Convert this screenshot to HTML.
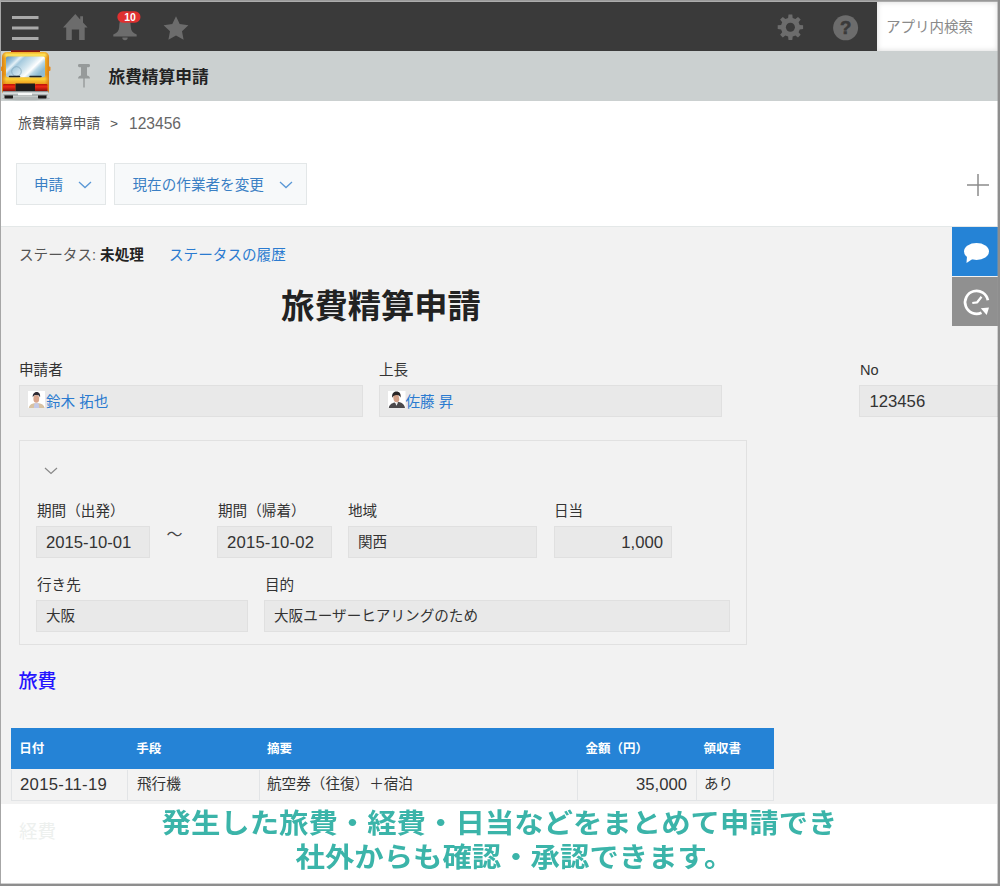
<!DOCTYPE html>
<html lang="ja">
<head>
<meta charset="utf-8">
<title>旅費精算申請</title>
<style>
*{box-sizing:border-box;margin:0;padding:0}
html,body{width:1000px;height:886px;overflow:hidden;background:#fff}
body{font-family:"Liberation Sans","Noto Sans CJK JP",sans-serif;color:#333;font-size:14px;position:relative}
.abs{position:absolute}
.fr{position:absolute;z-index:50}
#frT{left:0;top:0;width:1000px;height:2px;background:linear-gradient(#999 50%,#acacac 50%)}
#frL{left:0;top:0;width:1px;height:886px;background:#a6a6a6}
#frR{left:997px;top:0;width:3px;height:886px;background:linear-gradient(90deg,rgba(150,150,150,0.45) 33.3%,#8e8e8e 33.3%)}
#frB{left:0;top:883px;width:1000px;height:3px;background:linear-gradient(rgba(150,150,150,0.45) 33.3%,#8e8e8e 33.3%)}
#topbar{left:1px;top:2px;width:876px;height:48.500px;background:#3a3a3a}
#search{left:877px;top:2px;width:121px;height:49px;background:#fff;box-shadow:inset 0 0 5px 1px #e2e2e2;color:#8a8a8a;font-size:14.5px;line-height:50.500px;padding-left:9px;white-space:nowrap}
#appbar{left:1px;top:50.500px;width:997px;height:50px;background:#cbd0d0}
#apptitle{left:108.500px;top:52.500px;height:50px;line-height:50px;font-size:16.7px;font-weight:700;color:#222;white-space:nowrap}
#crumb{left:18px;top:113px;font-size:13.7px;line-height:22px;color:#555;white-space:nowrap}
#crumb span.n{font-size:15.6px;color:#666}
.btn{top:163px;height:42px;background:#f7f9fa;border:1px solid #e3e7e8;color:#3a7fc4;font-size:14.6px;line-height:43px;white-space:nowrap}
#content{left:1px;top:226px;width:996px;height:578px;background:#f2f2f2;border-top:1px solid #e4e8e8}
.lbl{font-size:14.6px;line-height:21px;color:#333;white-space:nowrap}
.fld{height:32px;background:#e9e9e9;border:1px solid #e0e0e0;font-size:14.6px;line-height:31px;padding:0 9px;color:#333;white-space:nowrap}
.fld.r{text-align:right}
.fld a,.link{color:#2b7bd0;text-decoration:none}
#group{left:19px;top:440px;width:728px;height:205px;border:1px solid #e1e1e1;background:#f2f2f2}
#thead{left:10.800px;top:727.800px;width:763.500px;height:41.700px;background:#2583d6}
.th{top:728px;height:41px;line-height:43px;color:#fff;font-size:12.5px;font-weight:700;white-space:nowrap}
#trow{left:10.800px;top:769.500px;width:763.500px;height:31px;background:#f3f3f3;border:1px solid #e2e4e6;border-top:none}
.td{top:769px;height:30px;line-height:31px;font-size:14.6px;color:#333;white-space:nowrap}
.vsep{top:769.500px;width:1px;height:30px;background:#e2e4e6}
#overlay{left:1px;top:803.500px;width:997px;height:80px;background:rgba(255,255,255,0.96)}
#caption,#caption2{transform-origin:0 50%;transform:scaleY(0.93);font-size:29.4px;line-height:36px;font-weight:700;color:#3bb4a9;white-space:nowrap;z-index:20}
.n{font-size:16.7px}
</style>
</head>
<body>
<!-- top bar -->
<div id="topbar" class="abs"></div>
<svg class="abs" style="left:1px;top:2px" width="876" height="49" viewBox="0 0 876 49">
  <g fill="#a9a9a9">
    <rect x="11" y="14" width="26.500" height="3"/>
    <rect x="11" y="24.500" width="26.500" height="3"/>
    <rect x="11" y="35" width="26.500" height="3"/>
  </g>
  <path fill="#6c6c6c" d="M62 25.400 L74.300 12.100 L79.200 17.400 V14.200 H82 V20.400 L86.600 25.400 H83.700 V38 H78.100 V27.500 H70.800 V38 H65.200 V25.400 Z"/>
  <g fill="#6c6c6c">
    <path d="M124 15.500 C118.500 15.500 118.500 21 118.200 25 C118 29 116 31 112.300 32.500 V34.500 H135.700 V32.500 C132 31 130 29 129.800 25 C129.500 21 129.500 15.500 124 15.500 Z"/>
    <path d="M121.300 35.500 H126.700 A2.700 2.700 0 0 1 121.300 35.500 Z"/>
  </g>
  <rect x="116.300" y="9.300" width="23.200" height="11.400" rx="5.700" fill="#e03030"/>
  <path fill="#6c6c6c" d="M175 14.200 L178.700 22.100 L187.400 23.200 L181 29.200 L182.600 37.700 L175 33.500 L167.400 37.700 L169 29.200 L162.600 23.200 L171.300 22.100 Z"/>
  <g transform="translate(789.400,25.200)">
    <path fill="#6c6c6c" d="M9.300 -2.300 L12.700 -1.900 L12.700 1.900 L9.300 2.300 L8.200 5.000 L10.300 7.600 L7.600 10.300 L5.000 8.200 L2.300 9.300 L1.900 12.700 L-1.900 12.700 L-2.300 9.300 L-5.000 8.200 L-7.600 10.300 L-10.300 7.600 L-8.200 5.000 L-9.300 2.300 L-12.700 1.900 L-12.700 -1.900 L-9.300 -2.300 L-8.200 -5.000 L-10.300 -7.600 L-7.600 -10.300 L-5.000 -8.200 L-2.300 -9.300 L-1.900 -12.700 L1.900 -12.700 L2.300 -9.300 L5.000 -8.200 L7.600 -10.300 L10.300 -7.600 L8.200 -5.000 Z"/>
    <circle r="4.500" fill="#3a3a3a"/>
  </g>
  <circle cx="844.600" cy="25.800" r="12.500" fill="#6c6c6c"/>
</svg>
<div class="abs" style="left:118px;top:10.500px;width:24px;height:12px;line-height:12px;text-align:center;font-size:10.500px;font-weight:700;color:#fff;letter-spacing:-0.2px">10</div>
<div class="abs" style="left:833.600px;top:17px;width:24px;height:22px;line-height:22px;text-align:center;font-size:18.500px;font-weight:700;color:#3a3a3a;-webkit-text-stroke:0.600px #3a3a3a">?</div>
<div id="search" class="abs">アプリ内検索</div>

<!-- app bar -->
<div id="appbar" class="abs"></div>
<svg class="abs" style="left:0;top:46px" width="100" height="58" viewBox="0 46 100 58">
  <defs>
    <linearGradient id="gb" x1="0" y1="0" x2="0" y2="1"><stop offset="0" stop-color="#f3a922"/><stop offset="0.070" stop-color="#fde65c"/><stop offset="0.160" stop-color="#f6b526"/><stop offset="0.550" stop-color="#f0a21c"/><stop offset="0.660" stop-color="#fbd23a"/><stop offset="0.780" stop-color="#ee9a1a"/><stop offset="1" stop-color="#d9781a"/></linearGradient>
    <linearGradient id="gs" x1="0" y1="0" x2="1" y2="0"><stop offset="0" stop-color="#d67c14" stop-opacity="0.900"/><stop offset="0.090" stop-color="#d67c14" stop-opacity="0"/><stop offset="0.910" stop-color="#d67c14" stop-opacity="0"/><stop offset="1" stop-color="#d67c14" stop-opacity="0.900"/></linearGradient>
    <linearGradient id="gw" x1="0" y1="0" x2="1" y2="0.550"><stop offset="0" stop-color="#5b8fb3"/><stop offset="0.220" stop-color="#a9cbe0"/><stop offset="0.300" stop-color="#e6f1f7"/><stop offset="0.380" stop-color="#a4c9dd"/><stop offset="0.620" stop-color="#d5e7f0"/><stop offset="0.760" stop-color="#ffffff"/><stop offset="0.860" stop-color="#b9d7e6"/><stop offset="1" stop-color="#8fbcd3"/></linearGradient>
    <linearGradient id="gr" x1="0" y1="0" x2="0" y2="1"><stop offset="0" stop-color="#b81208"/><stop offset="0.350" stop-color="#ee2a14"/><stop offset="1" stop-color="#7e0a06"/></linearGradient>
    <linearGradient id="gm" x1="0" y1="0" x2="0" y2="1"><stop offset="0" stop-color="#6e7677"/><stop offset="0.450" stop-color="#e9eded"/><stop offset="1" stop-color="#8a9293"/></linearGradient>
  </defs>
  <ellipse cx="26" cy="98.500" rx="24" ry="1.800" fill="#9aa0a0" opacity="0.550"/>
  <rect x="11" y="50.300" width="29" height="3" fill="#8e1a10"/>
  <rect x="0.800" y="66.500" width="3" height="4.500" rx="1" fill="#e8891a"/>
  <rect x="47.500" y="66.500" width="3" height="4.500" rx="1" fill="#e8891a"/>
  <rect x="4.500" y="94" width="8.500" height="4.600" rx="1.200" fill="#1d1b1b"/>
  <rect x="38" y="94" width="8.500" height="4.600" rx="1.200" fill="#1d1b1b"/>
  <path d="M7.500 52 H43.500 Q49 52 49 57.500 V91 Q49 93 47 93 H4 Q2 93 2 91 V57.500 Q2 52 7.500 52 Z" fill="url(#gb)"/>
  <path d="M7.500 52 H43.500 Q49 52 49 57.500 V91 Q49 93 47 93 H4 Q2 93 2 91 V57.500 Q2 52 7.500 52 Z" fill="url(#gs)"/>
  <rect x="6" y="56.500" width="39" height="20.800" rx="1.800" fill="url(#gw)"/>
  <circle cx="16.500" cy="71.500" r="4.800" fill="none" stroke="#7fa3b8" stroke-width="1" opacity="0.700"/>
  <path d="M9.500 76.600 H19.500 M30 76.600 H41" stroke="#22282b" stroke-width="1.500" stroke-linecap="round"/>
  <rect x="3" y="84" width="12.500" height="7.600" rx="1" fill="url(#gr)"/>
  <rect x="35" y="84" width="12.500" height="7.600" rx="1" fill="url(#gr)"/>
  <rect x="15.500" y="83.500" width="19.500" height="7.700" fill="#1e1d1d"/>
  <path d="M2.500 91 H48.500 L47.500 95.500 H3.500 Z" fill="url(#gm)"/>
  <rect x="18" y="93" width="14" height="2.200" fill="#f7f9f9"/>
</svg>
<svg class="abs" style="left:76px;top:62px" width="16" height="28" viewBox="76 62 16 28">
  <g fill="#969a9a">
    <rect x="78" y="64" width="12" height="3.200" rx="1.400"/>
    <rect x="81" y="66.500" width="6" height="10"/>
    <path d="M78 78.500 C78 76.500 80 75.500 81 75.500 H87 C88 75.500 90 76.500 90 78.500 Z"/>
    <rect x="83.300" y="78" width="1.400" height="9.500"/>
  </g>
</svg>
<div id="apptitle" class="abs">旅費精算申請</div>

<!-- breadcrumb -->
<div id="crumb" class="abs">旅費精算申請<span style="position:absolute;left:92px;top:0">&gt;</span><span class="n" style="position:absolute;left:111px;top:-0.500px">123456</span></div>

<!-- buttons -->
<div class="abs btn" style="left:16px;width:90px;padding-left:17px">申請</div>
<div class="abs btn" style="left:114px;width:193px;padding-left:17.500px">現在の作業者を変更</div>
<svg class="abs" style="left:77.300px;top:178.700px" width="16" height="12" viewBox="0 0 16 12"><path d="M2 3 L8 8.500 L14 3" fill="none" stroke="#5a98d6" stroke-width="1.300"/></svg>
<svg class="abs" style="left:278px;top:178.700px" width="16" height="12" viewBox="0 0 16 12"><path d="M2 3 L8 8.500 L14 3" fill="none" stroke="#5a98d6" stroke-width="1.300"/></svg>
<svg class="abs" style="left:965.500px;top:172.500px" width="24" height="24" viewBox="0 0 24 24"><path d="M12 1 V23 M1 12 H23" stroke="#8c8c8c" stroke-width="1.500" fill="none"/></svg>

<!-- content -->
<div id="content" class="abs"></div>
<div class="abs" style="left:19px;top:244px;font-size:14.6px;line-height:22px;color:#555;white-space:nowrap">ステータス: <b style="color:#222">未処理</b></div>
<div class="abs link" style="left:169px;top:244px;font-size:14.6px;line-height:22px;white-space:nowrap">ステータスの履歴</div>
<div class="abs" style="left:181px;top:282.500px;width:400px;text-align:center;font-size:33.3px;line-height:48px;font-weight:700;color:#222;white-space:nowrap">旅費精算申請</div>

<!-- side tabs -->
<div class="abs" style="left:952px;top:227px;width:46px;height:49px;background:#2583d6"></div>
<div class="abs" style="left:952px;top:277px;width:46px;height:49px;background:#909090"></div>
<svg class="abs" style="left:952px;top:227px" width="46" height="99" viewBox="0 0 46 99">
  <g fill="#fff">
    <ellipse cx="24.500" cy="24.500" rx="12.500" ry="8.500"/>
    <path d="M15 29 L14.500 36 L22 31 Z"/>
  </g>
  <path d="M35.900 73.300 A11.500 11.500 0 1 0 29.500 85.700" fill="none" stroke="#fff" stroke-width="2.700"/>
  <path d="M28.800 81.300 L37 80.600 L34.700 88 Z" fill="#fff"/>
  <path d="M20.300 76 L25.200 75.300 L29.500 69.800" fill="none" stroke="#fff" stroke-width="2.200" stroke-linejoin="round"/>
</svg>

<!-- row 1 -->
<div class="abs lbl" style="left:19px;top:360px">申請者</div>
<div class="abs fld" style="left:19px;top:385px;width:344px;padding-left:26px;line-height:32px"><a>鈴木 拓也</a></div>
<div class="abs lbl" style="left:379px;top:360px">上長</div>
<div class="abs fld" style="left:379px;top:385px;width:343px;padding-left:25.500px;line-height:32px"><a>佐藤 昇</a></div>
<div class="abs lbl" style="left:860px;top:360px">No</div>
<div class="abs fld n" style="left:859px;top:385px;width:140px;border-right:none;padding-left:9.500px;line-height:32px">123456</div>


<svg class="abs" style="left:28px;top:391px" width="17" height="17" viewBox="0 0 17 17">
  <defs><filter id="bl" x="-10%" y="-10%" width="120%" height="120%"><feGaussianBlur stdDeviation="0.450"/></filter><clipPath id="cp"><rect x="0" y="0" width="17" height="17"/></clipPath></defs>
  <rect width="17" height="17" fill="#fff"/>
  <g filter="url(#bl)" clip-path="url(#cp)">
    <path d="M0.800 17 C1.200 13.800 4 12.600 6 12.300 H11 C13.500 12.600 16 13.800 16.700 17 Z" fill="#d8c2a3"/>
    <path d="M5.800 17 L6.500 12.300 H10.500 L11.200 17 Z" fill="#c3c9e8"/>
    <ellipse cx="8.300" cy="7.800" rx="2.900" ry="3.900" fill="#d9a58c"/>
    <path d="M4.800 6.300 C4.300 2.200 7 0.900 8.600 0.900 C10.500 0.900 12.800 2.400 12 6.600 C11.500 4.600 10.500 3.900 8.500 4 C6.500 4 5.600 4.500 4.800 6.300 Z" fill="#2e2a33"/>
  </g>
</svg>
<svg class="abs" style="left:388px;top:391px" width="17.500" height="17" viewBox="0 0 17.500 17">
  <rect width="17.500" height="17" fill="#fff"/>
  <g filter="url(#bl)">
    <path d="M0.800 17 C1.200 13.500 4 12.200 6.500 11.500 L8.500 12.800 L10.500 10.800 C13.500 11.800 16.500 13 17 17 Z" fill="#4b4a4c"/>
    <path d="M7.300 12.300 L8.500 14.800 L9.800 12 Z" fill="#f4f4f6"/>
    <ellipse cx="8.300" cy="7.400" rx="2.900" ry="3.900" fill="#d29f86" transform="rotate(-12 8.300 7.400)"/>
    <path d="M4.300 6.800 C3.300 2.500 6.300 0.600 8.600 0.600 C11 0.600 13.500 2.600 12.500 6.800 C12 4.800 10.500 3.900 8.500 4.100 C6.500 4.200 5.300 5 4.300 6.800 Z" fill="#2a2628"/>
  </g>
</svg>
<!-- group -->
<div id="group" class="abs"></div>
<svg class="abs" style="left:43px;top:465px" width="16" height="12" viewBox="0 0 16 12"><path d="M2 3 L8 8.500 L14 3" fill="none" stroke="#888" stroke-width="1.200"/></svg>
<div class="abs lbl" style="left:37px;top:501px">期間（出発）</div>
<div class="abs fld n" style="left:36px;top:526px;width:114px">2015-10-01</div>
<div class="abs" style="left:166.500px;top:522.500px;font-size:16px;line-height:24px;color:#444">～</div>
<div class="abs lbl" style="left:218px;top:501px">期間（帰着）</div>
<div class="abs fld n" style="left:217px;top:526px;width:115px;letter-spacing:0.180px">2015-10-02</div>
<div class="abs lbl" style="left:348px;top:501px">地域</div>
<div class="abs fld" style="left:348px;top:526px;width:189px">関西</div>
<div class="abs lbl" style="left:554px;top:501px">日当</div>
<div class="abs fld r n" style="left:554px;top:526px;width:118px;padding-right:8px">1,000</div>
<div class="abs lbl" style="left:37px;top:575px">行き先</div>
<div class="abs fld" style="left:36px;top:599.500px;width:212px">大阪</div>
<div class="abs lbl" style="left:265px;top:575px">目的</div>
<div class="abs fld" style="left:264px;top:599.500px;width:466px">大阪ユーザーヒアリングのため</div>

<!-- section label -->
<div class="abs" style="left:18.500px;top:668.500px;font-size:19px;line-height:26px;color:#2414ff;font-weight:500;white-space:nowrap">旅費</div>

<!-- table -->
<div id="thead" class="abs"></div>
<div class="abs th" style="left:19.200px">日付</div>
<div class="abs th" style="left:136.200px">手段</div>
<div class="abs th" style="left:267px">摘要</div>
<div class="abs th" style="left:585.500px">金額（円）</div>
<div class="abs th" style="left:703.500px">領収書</div>
<div id="trow" class="abs"></div>
<div class="abs vsep" style="left:127.200px"></div>
<div class="abs vsep" style="left:259px"></div>
<div class="abs vsep" style="left:577px"></div>
<div class="abs vsep" style="left:695.800px"></div>
<div class="abs td n" style="left:20px;letter-spacing:0.3px">2015-11-19</div>
<div class="abs td" style="left:137px">飛行機</div>
<div class="abs td" style="left:267px">航空券（往復）＋宿泊</div>
<div class="abs td n" style="left:577px;width:110px;text-align:right">35,000</div>
<div class="abs td" style="left:704px">あり</div>

<div class="abs" style="left:19px;top:818.500px;font-size:18.5px;line-height:26px;color:#edf0ee;white-space:nowrap;z-index:20">経費</div>

<!-- caption overlay -->
<div id="overlay" class="abs"></div>
<div id="caption" class="abs" style="left:161.500px;top:806px">発生した旅費・経費・日当などをまとめて申請でき</div>
<div id="caption2" class="abs" style="left:295.500px;top:839.500px">社外からも確認・承認できます。</div>

<div id="frT" class="fr"></div><div id="frL" class="fr"></div><div id="frR" class="fr"></div><div id="frB" class="fr"></div>
</body>
</html>
